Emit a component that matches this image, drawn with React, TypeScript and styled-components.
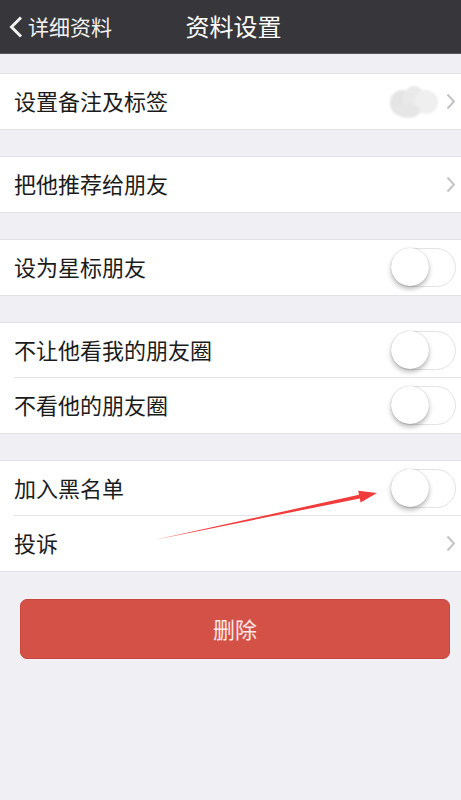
import React from 'react';
import styled, {createGlobalStyle} from "styled-components";

const GlobalStyle = createGlobalStyle`
  html, body {
    margin: 0;
    padding: 0;
    background: #efeff4;
    font-family: "Noto Sans CJK SC", "Noto Sans", sans-serif;
  }
`

const Page = styled.div`
  position: relative;
  width: 461px;
  min-height: 800px;
  background: #efeff4;
  overflow: hidden;
`

const Header = styled.div`
  height: 54px;
  background: #37373b;
  border-bottom: 1px solid #58585c;
  box-sizing: border-box;
  display: flex;
  align-items: center;
  position: relative;
`

const Back = styled.div`
  display: flex;
  align-items: center;
  gap: 5px;
  padding-left: 9px;
  color: #f2f2f2;
  font-size: 21px;
  line-height: 1;
  z-index: 1;
`

const Title = styled.div`
  position: absolute;
  left: 0;
  right: 0;
  text-align: center;
  color: #ffffff;
  font-size: 24px;
  line-height: 1;
  padding: 0 0 2px 6px;
`

const Content = styled.div`
  display: flex;
  flex-direction: column;
  gap: 26px;
  padding-top: 19px;
`

const Group = styled.div`
  background: #ffffff;
  border-top: 1px solid #e2e2e6;
  border-bottom: 1px solid #e2e2e6;
`

const Row = styled.div<{ $divider?: boolean }>`
  height: 55px;
  display: flex;
  align-items: center;
  justify-content: space-between;
  padding: 0 5px 0 14px;
  position: relative;

  ${p => p.$divider && `
    &::after {
      content: '';
      position: absolute;
      left: 14px;
      right: 0;
      bottom: 0;
      height: 1px;
      background: #e4e4e8;
    }
  `}
`

const Label = styled.span`
  font-size: 22px;
  line-height: 1;
  color: #1b1b1b;
  padding-bottom: 3px;
`

const Right = styled.div`
  display: flex;
  align-items: center;
  gap: 6px;
`

const Track = styled.div`
  width: 65px;
  height: 39px;
  border-radius: 20px;
  border: 1.5px solid #e3e3e3;
  box-sizing: border-box;
  background: #ffffff;
  position: relative;
`

const Knob = styled.div`
  position: absolute;
  left: -1px;
  top: -1px;
  width: 38px;
  height: 38px;
  border-radius: 50%;
  background: #ffffff;
  box-shadow: 0 3px 5px rgba(0, 0, 0, 0.28), 0 0 1px rgba(0, 0, 0, 0.25);
`

const DeleteButton = styled.div`
  margin: 1px 11px 0 20px;
  height: 60px;
  border-radius: 7px;
  background: #d45147;
  border: 1px solid #c8463d;
  box-sizing: border-box;
  display: flex;
  align-items: center;
  justify-content: center;
  color: #fbe9e7;
  font-size: 22px;
  line-height: 1;
  padding-bottom: 2px;
`

const Overlay = styled.svg`
  position: absolute;
  left: 0;
  top: 0;
  pointer-events: none;
`

const Chevron = () => (
    <svg width="10" height="17" viewBox="0 0 10 17">
        <path d="M1.5 1.5 L8 8.5 L1.5 15.5" fill="none" stroke="#c4c4c8" strokeWidth="2"/>
    </svg>
);

const Switch = () => (
    <Track><Knob/></Track>
);

const Blurred = () => (
    <svg width="52" height="36" viewBox="0 0 52 36">
        <defs>
            <filter id="bl"><feGaussianBlur stdDeviation="1"/></filter>
        </defs>
        <g filter="url(#bl)">
            <ellipse cx="14" cy="19" rx="12" ry="13" fill="#e4e4e4"/>
            <ellipse cx="26" cy="16" rx="11" ry="14" fill="#e9e9e9"/>
            <ellipse cx="38" cy="18" rx="12" ry="12" fill="#efefef"/>
            <ellipse cx="20" cy="27" rx="12" ry="7" fill="#e6e6e6"/>
        </g>
    </svg>
);

export default function App() {
    return (
        <Page>
            <GlobalStyle/>
            <Header>
                <Back>
                    <svg width="14" height="22" viewBox="0 0 14 22">
                        <path d="M12 1.5 L2.5 11 L12 20.5" fill="none" stroke="#f2f2f2" strokeWidth="3"/>
                    </svg>
                    <span>详细资料</span>
                </Back>
                <Title>资料设置</Title>
            </Header>
            <Content>
                <Group>
                    <Row>
                        <Label>设置备注及标签</Label>
                        <Right><Blurred/><Chevron/></Right>
                    </Row>
                </Group>
                <Group>
                    <Row>
                        <Label>把他推荐给朋友</Label>
                        <Chevron/>
                    </Row>
                </Group>
                <Group>
                    <Row>
                        <Label>设为星标朋友</Label>
                        <Switch/>
                    </Row>
                </Group>
                <Group>
                    <Row $divider>
                        <Label>不让他看我的朋友圈</Label>
                        <Switch/>
                    </Row>
                    <Row>
                        <Label>不看他的朋友圈</Label>
                        <Switch/>
                    </Row>
                </Group>
                <Group>
                    <Row $divider>
                        <Label>加入黑名单</Label>
                        <Switch/>
                    </Row>
                    <Row>
                        <Label>投诉</Label>
                        <Chevron/>
                    </Row>
                </Group>
                <DeleteButton>删除</DeleteButton>
            </Content>
            <Overlay width="461" height="800" viewBox="0 0 461 800">
                <polygon
                    points="154,540 359,494.8 358.2,490.7 377,493 360.6,502.5 359.8,498.4"
                    fill="#f23b3b"
                />
            </Overlay>
        </Page>
    );
}
